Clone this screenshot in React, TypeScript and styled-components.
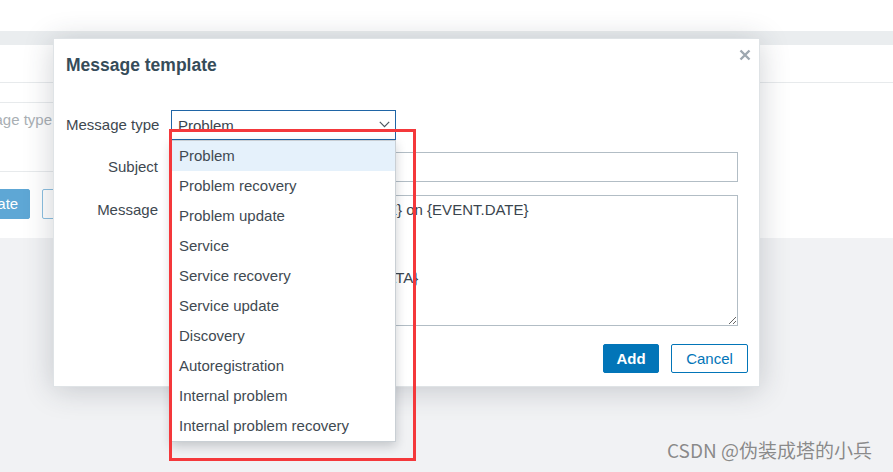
import React from 'react';
import styled, { createGlobalStyle } from 'styled-components';

const messageTypes = [
    'Problem',
    'Problem recovery',
    'Problem update',
    'Service',
    'Service recovery',
    'Service update',
    'Discovery',
    'Autoregistration',
    'Internal problem',
    'Internal problem recovery',
];

const messageText = `Problem started at {EVENT.TIME} on {EVENT.DATE}
Problem name: {EVENT.NAME}
Host: {HOST.NAME}
Severity: {EVENT.SEVERITY}
Operational data: {EVENT.OPDATA}
Original problem ID: {EVENT.ID}
{TRIGGER.URL}`;

const App = () => {
    return (
        <Page>
            <GlobalStyle />
            <TopBar />
            <Band />
            <Panel>
                <TabRow />
                <SubHead />
                <FieldRow>
                    <GhostLabel><span>Message type</span></GhostLabel>
                </FieldRow>
                <GhostButtons>
                    <GhostButton primary>Update</GhostButton>
                    <GhostButton>Clone</GhostButton>
                </GhostButtons>
            </Panel>

            <Dialog>
                <Header>
                    <Title>Message template</Title>
                    <CloseButton>
                        <svg width="12" height="12" viewBox="0 0 12 12">
                            <path d="M1.5 1.5 L10.5 10.5 M10.5 1.5 L1.5 10.5" stroke="#9ea8b0" strokeWidth="2.4" />
                        </svg>
                    </CloseButton>
                </Header>
                <Form>
                    <Label>Message type</Label>
                    <SelectWrap>
                        <Select>
                            <span>Problem</span>
                            <svg width="11" height="7" viewBox="0 0 11 7">
                                <polyline points="0.8,0.8 5.5,5.6 10.2,0.8" fill="none" stroke="#4c565e" strokeWidth="1.2" />
                            </svg>
                        </Select>
                        <Options>
                            {messageTypes.map((t, i) => (
                                <Option key={t} active={i === 0}>{t}</Option>
                            ))}
                        </Options>
                    </SelectWrap>

                    <Label>Subject</Label>
                    <Input />

                    <Label top>Message</Label>
                    <TextArea readOnly defaultValue={messageText} />
                </Form>
                <Footer>
                    <Button primary>Add</Button>
                    <Button>Cancel</Button>
                </Footer>
            </Dialog>

            <Annotation />
            <Watermark>CSDN @伪装成塔的小兵</Watermark>
        </Page>
    );
}


// styled-components
const GlobalStyle = createGlobalStyle`
    html, body {
        margin: 0;
        padding: 0;
        background: #f1f2f4;
        font-family: "Liberation Sans", Arial, sans-serif;
    }
`;

const Page = styled.div`
    position: relative;
    width: 893px;
    height: 472px;
    overflow: hidden;
    background: #f1f2f4;
    display: flex;
    flex-direction: column;
`;

const TopBar = styled.div`
    height: 31px;
    flex-shrink: 0;
    background: #ffffff;
`;

const Band = styled.div`
    height: 14px;
    flex-shrink: 0;
    background: #eaedef;
`;

const Panel = styled.div`
    height: 193px;
    flex-shrink: 0;
    background: #ffffff;
    display: flex;
    flex-direction: column;
`;

const TabRow = styled.div`
    height: 37px;
    border-bottom: 1px solid #e7eaec;
`;

const SubHead = styled.div`
    width: 420px;
    height: 19px;
    border-bottom: 1px solid #e7eaec;
`;

const FieldRow = styled.div`
    width: 420px;
    height: 60px;
    padding-top: 8px;
    border-bottom: 1px solid #e7eaec;
`;

const GhostLabel = styled.div`
    width: 52px;
    display: flex;
    justify-content: flex-end;
    white-space: nowrap;
    font-size: 15px;
    line-height: 17px;
    color: #a9afb4;
`;

const GhostButtons = styled.div`
    display: flex;
    gap: 12px;
    margin: 17px 0 0 -42px;
`;

const GhostButton = styled.div<{ primary?: boolean }>`
    box-sizing: border-box;
    width: 72px;
    height: 30px;
    border-radius: 2px;
    font-size: 15px;
    line-height: 28px;
    text-align: center;
    color: ${p => p.primary ? '#ffffff' : '#7fb6dc'};
    background: ${p => p.primary ? '#5ea7d5' : '#ffffff'};
    border: 1px solid ${p => p.primary ? '#5ea7d5' : '#8bbfe0'};
`;

const Dialog = styled.div`
    position: absolute;
    left: 53px;
    top: 38px;
    width: 707px;
    height: 349px;
    box-sizing: border-box;
    background: #ffffff;
    border: 1px solid #dfe3e6;
    box-shadow: 0 3px 28px rgba(40, 52, 62, 0.22);
`;

const Header = styled.div`
    display: flex;
    justify-content: space-between;
    align-items: flex-start;
    height: 52px;
    padding: 0 8px 0 12px;
`;

const Title = styled.h4`
    margin: 0;
    font-size: 17.5px;
    font-weight: bold;
    line-height: 52px;
    color: #364c59;
`;

const CloseButton = styled.div`
    margin-top: 10px;
    width: 12px;
    height: 12px;
    display: flex;
`;

const Form = styled.div`
    display: grid;
    grid-template-columns: 92px 567px;
    column-gap: 13px;
    row-gap: 12px;
    padding: 19px 0 0 12px;
`;

const Label = styled.div<{ top?: boolean }>`
    text-align: right;
    font-size: 15px;
    color: #3e4850;
    line-height: ${p => p.top ? '17px' : '30px'};
    padding-top: ${p => p.top ? '7px' : '0'};
    white-space: nowrap;
`;

const SelectWrap = styled.div`
    position: relative;
    width: 225px;
    z-index: 2;
`;

const Select = styled.div`
    box-sizing: border-box;
    height: 30px;
    display: flex;
    align-items: center;
    justify-content: space-between;
    padding: 0 5px 0 6px;
    border: 1px solid #1f65a6;
    font-size: 15px;
    color: #3a454e;
    background: #ffffff;

    svg {
        margin-top: -2px;
    }
`;

const Options = styled.ul`
    position: absolute;
    top: 100%;
    left: 0;
    width: 225px;
    box-sizing: border-box;
    margin: 0;
    padding: 0;
    list-style: none;
    background: #ffffff;
    border: 1px solid #c9cfd4;
    box-shadow: 0 4px 10px rgba(30, 40, 50, 0.22);
`;

const Option = styled.li<{ active?: boolean }>`
    height: 30px;
    line-height: 30px;
    padding-left: 7px;
    font-size: 15px;
    color: #3f4a52;
    white-space: nowrap;
    background: ${p => p.active ? '#e5f1fb' : '#ffffff'};
`;

const Input = styled.div`
    box-sizing: border-box;
    height: 30px;
    border: 1px solid #b2bdc5;
    background: #ffffff;
`;

const TextArea = styled.textarea`
    box-sizing: border-box;
    width: 567px;
    height: 131px;
    margin: 1px 0 0 0;
    padding: 5px;
    border: 1px solid #b2bdc5;
    border-radius: 0;
    outline: none;
    overflow: hidden;
    resize: both;
    font-family: "Liberation Sans", Arial, sans-serif;
    font-size: 15px;
    line-height: normal;
    color: #3a454e;
    background: #ffffff;
`;

const Footer = styled.div`
    display: flex;
    justify-content: flex-end;
    gap: 12px;
    padding: 18px 11px 0 0;
`;

const Button = styled.div<{ primary?: boolean }>`
    box-sizing: border-box;
    height: 29px;
    min-width: ${p => p.primary ? '56px' : '77px'};
    border-radius: 2px;
    font-size: 15px;
    line-height: 27px;
    text-align: center;
    font-weight: ${p => p.primary ? 'bold' : 'normal'};
    color: ${p => p.primary ? '#ffffff' : '#0275b8'};
    background: ${p => p.primary ? '#0275b8' : '#ffffff'};
    border: 1px solid #0275b8;
`;

const Annotation = styled.div`
    position: absolute;
    left: 169px;
    top: 129px;
    width: 247px;
    height: 332px;
    box-sizing: border-box;
    border: 3px solid #f4383b;
    pointer-events: none;
    z-index: 5;
`;

const Watermark = styled.div`
    position: absolute;
    left: 667px;
    top: 438px;
    font-family: "Noto Sans CJK SC", "Liberation Sans", sans-serif;
    font-size: 19px;
    line-height: 24px;
    color: #8a8a8a;
    text-shadow: 0 0 1px #ffffff;
    white-space: nowrap;
    z-index: 6;
`;

export default App;
